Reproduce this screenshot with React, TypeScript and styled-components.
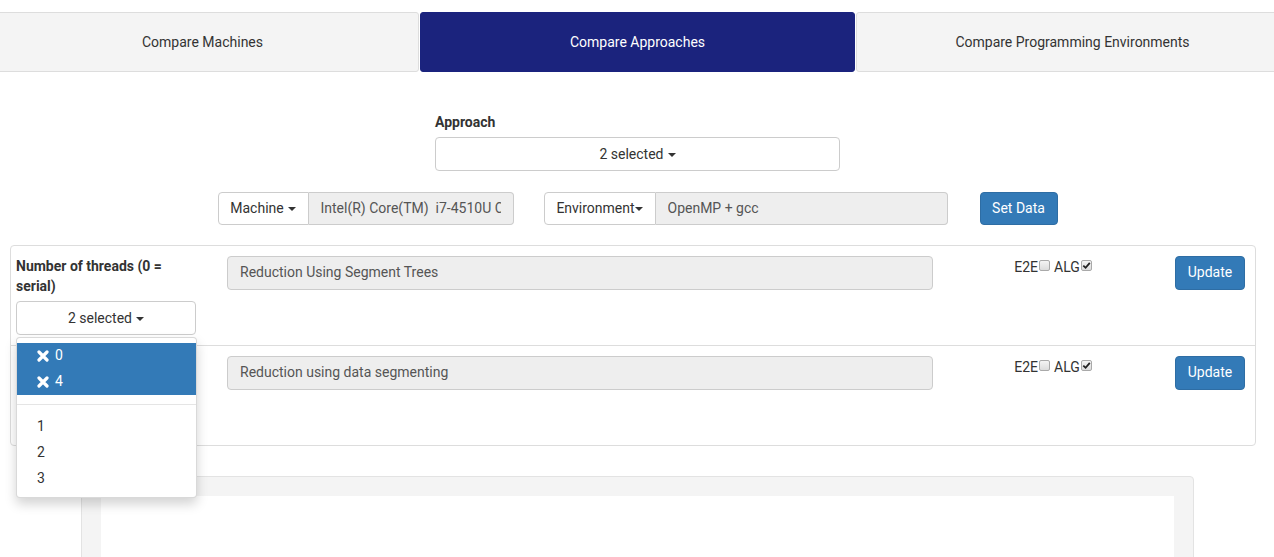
import React from 'react';
import styled, { createGlobalStyle } from 'styled-components';

const GlobalStyle = createGlobalStyle`
  html, body {
    margin: 0;
    padding: 0;
    background: #fff;
  }
  body {
    font-family: Roboto, "Liberation Sans", Arial, sans-serif;
    font-size: 14px;
    line-height: 1.42857;
    color: #333;
    overflow: hidden;
  }
  * { box-sizing: border-box; }
`;

const Page = styled.div`
  width: 1274px;
  padding-top: 12px;
  overflow: hidden;
`;

const TabBar = styled.div`
  display: flex;
  gap: 1px;
  margin-left: -14px;
`;

const Tab = styled.div<{ $active?: boolean; $w: number }>`
  flex: 0 0 ${(p) => p.$w}px;
  height: 60px;
  padding-top: 2px;
  display: flex;
  align-items: center;
  justify-content: center;
  border: 1px solid ${(p) => (p.$active ? '#1a237e' : '#ddd')};
  border-radius: 3px;
  background: ${(p) => (p.$active ? '#1b237d' : '#f4f4f4')};
  color: ${(p) => (p.$active ? '#fff' : '#333')};
  font-size: 14px;
  cursor: pointer;
`;

const ApproachBlock = styled.div`
  width: 406px;
  margin: 40px auto 0;
  padding-left: 1px;
`;

const Label = styled.div`
  font-weight: 700;
  margin-bottom: 5px;
  line-height: 20px;
`;

const Caret = styled.span<{ $tight?: boolean }>`
  display: inline-block;
  width: 0;
  height: 0;
  margin-left: ${(p) => (p.$tight ? '0' : '4px')};
  vertical-align: middle;
  border-top: 4px solid #333;
  border-left: 4px solid transparent;
  border-right: 4px solid transparent;
`;

const SelectButton = styled.div`
  width: 100%;
  height: 34px;
  padding-top: 1px;
  display: flex;
  align-items: center;
  justify-content: center;
  background: #fff;
  border: 1px solid #ccc;
  border-radius: 4px;
  color: #333;
`;

const ControlsRow = styled.div`
  display: flex;
  justify-content: center;
  align-items: center;
  margin-top: 21px;
  padding-left: 1px;
`;

const InputGroup = styled.div<{ $w: number; $mr: number }>`
  display: flex;
  width: ${(p) => p.$w}px;
  margin-right: ${(p) => p.$mr}px;
  height: 33px;
`;

const Addon = styled.div<{ $w: number }>`
  flex: 0 0 ${(p) => p.$w}px;
  display: flex;
  align-items: center;
  justify-content: center;
  background: #fff;
  border: 1px solid #ccc;
  border-radius: 4px 0 0 4px;
  color: #333;
  white-space: nowrap;
`;

const ReadOnlyInput = styled.div<{ $grouped?: boolean }>`
  flex: 1;
  min-width: 0;
  height: 100%;
  display: flex;
  align-items: center;
  padding: 0 12px;
  background: #eee;
  border: 1px solid #ccc;
  border-left-width: ${(p) => (p.$grouped ? 0 : 1)}px;
  border-radius: ${(p) => (p.$grouped ? '0 4px 4px 0' : '4px')};
  color: #555;
`;

const InputText = styled.span`
  display: block;
  width: 100%;
  overflow: hidden;
  white-space: nowrap;
`;

const PrimaryButton = styled.div<{ $w: number; $h?: number }>`
  width: ${(p) => p.$w}px;
  height: ${(p) => p.$h ?? 33}px;
  display: flex;
  align-items: center;
  justify-content: center;
  background: #337ab7;
  border: 1px solid #2e6da4;
  border-radius: 4px;
  color: #fff;
`;

const Panel = styled.div`
  position: relative;
  margin: 20px 18px 0 10px;
  border: 1px solid #ddd;
  border-radius: 4px;
`;

const ApproachRow = styled.div`
  display: grid;
  grid-template-columns: 180px 706px 180px 69px;
  column-gap: 31px;
  align-items: start;
  height: 99px;
  padding: 10px 10px 0 5px;
  & + & {
    height: 100px;
    border-top: 1px solid #ddd;
  }
`;

const ThreadsCol = styled.div`
  display: flex;
  flex-direction: column;
`;

const RowInput = styled(ReadOnlyInput)`
  height: 34px;
`;

const Flags = styled.div`
  display: flex;
  justify-content: center;
  align-items: center;
  padding: 1px 0 0 2px;
  line-height: 20px;
`;

const FlagBox = styled.span`
  display: inline-flex;
  align-items: center;
  justify-content: center;
  width: 11px;
  height: 11px;
  margin: 0 4px 4px 1px;
  border: 1px solid #a9a9a9;
  border-radius: 2px;
  background: linear-gradient(#f4f4f4, #dcdcdc);
`;

const Menu = styled.div`
  position: absolute;
  left: 5px;
  top: 91px;
  width: 181px;
  padding: 5px 0;
  background: #fff;
  border: 1px solid rgba(0, 0, 0, 0.15);
  border-radius: 4px;
  box-shadow: 0 6px 12px rgba(0, 0, 0, 0.175);
  z-index: 5;
`;

const MenuItem = styled.div<{ $selected?: boolean }>`
  height: 26px;
  display: flex;
  align-items: center;
  gap: 6px;
  padding-left: 20px;
  background: ${(p) => (p.$selected ? '#337ab7' : '#fff')};
  color: ${(p) => (p.$selected ? '#fff' : '#333')};
`;

const Divider = styled.div`
  height: 1px;
  margin: 9px 0;
  background: #e5e5e5;
`;

const ChartCard = styled.div`
  width: 1113px;
  margin: 30px auto 0;
  padding: 19px 19px 0;
  background: #f4f4f4;
  border: 1px solid #e3e3e3;
  border-radius: 4px;
`;

const ChartArea = styled.div`
  height: 300px;
  background: #fff;
`;

const Times = () => (
  <svg width="12" height="12" viewBox="0 0 12 12">
    <path d="M2 2 L10 10 M10 2 L2 10" stroke="#fff" strokeWidth="3.2" strokeLinecap="round" />
  </svg>
);

const Check = () => (
  <svg width="9" height="9" viewBox="0 0 9 9">
    <path d="M1.3 4.6 L3.6 6.8 L7.8 1.8" stroke="#222" strokeWidth="1.8" fill="none" />
  </svg>
);

const approaches = ['Reduction Using Segment Trees', 'Reduction using data segmenting'];

export default function App() {
  return (
    <Page>
      <GlobalStyle />
      <TabBar>
        <Tab $w={433}>Compare Machines</Tab>
        <Tab $w={435} $active>Compare Approaches</Tab>
        <Tab $w={433}>Compare Programming Environments</Tab>
      </TabBar>

      <ApproachBlock>
        <Label>Approach</Label>
        <SelectButton>
          2 selected <Caret />
        </SelectButton>
      </ApproachBlock>

      <ControlsRow>
        <InputGroup $w={296} $mr={30}>
          <Addon $w={91}>
            Machine <Caret />
          </Addon>
          <ReadOnlyInput $grouped>
            <InputText>Intel(R) Core(TM)&nbsp; i7-4510U CPU @ 2.00GHz</InputText>
          </ReadOnlyInput>
        </InputGroup>
        <InputGroup $w={404} $mr={32}>
          <Addon $w={112}>
            Environment<Caret $tight />
          </Addon>
          <ReadOnlyInput $grouped>
            <InputText>OpenMP + gcc</InputText>
          </ReadOnlyInput>
        </InputGroup>
        <PrimaryButton $w={78}>Set Data</PrimaryButton>
      </ControlsRow>

      <Panel>
        {approaches.map((name) => (
          <ApproachRow key={name}>
            <ThreadsCol>
              <Label>Number of threads (0 = serial)</Label>
              <SelectButton>
                2 selected <Caret />
              </SelectButton>
            </ThreadsCol>
            <RowInput>
              <InputText>{name}</InputText>
            </RowInput>
            <Flags>
              E2E
              <FlagBox />
              ALG
              <FlagBox>
                <Check />
              </FlagBox>
            </Flags>
            <PrimaryButton $w={70} $h={34}>Update</PrimaryButton>
          </ApproachRow>
        ))}
        <Menu>
          <MenuItem $selected>
            <Times />0
          </MenuItem>
          <MenuItem $selected>
            <Times />4
          </MenuItem>
          <Divider />
          {['1', '2', '3'].map((n) => (
            <MenuItem key={n}>{n}</MenuItem>
          ))}
        </Menu>
      </Panel>

      <ChartCard>
        <ChartArea />
      </ChartCard>
    </Page>
  );
}
